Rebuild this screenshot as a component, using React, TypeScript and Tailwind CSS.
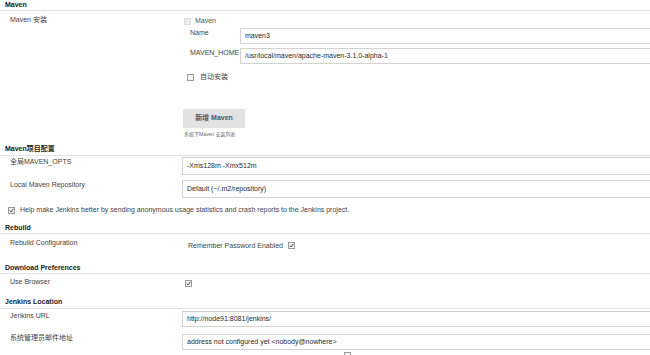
import React from 'react';

const Check = ({ checked = true, disabled = false }: { checked?: boolean; disabled?: boolean }) => (
  <svg width="7" height="7" viewBox="0 0 7 7" className="shrink-0">
    <rect
      x="0.5"
      y="0.5"
      width="6"
      height="6"
      fill={disabled ? '#ececec' : '#f4f4f4'}
      stroke={disabled ? '#dcdcdc' : '#9a9a9a'}
    />
    {checked && <path d="M1.7 3.6 L3 5 L5.4 1.8" fill="none" stroke="#333" strokeWidth="0.9" />}
  </svg>
);

const Header = ({ title, className = '' }: { title: string; className?: string }) => (
  <div className={`border-b border-[#e2e2e2] pl-[5px] font-bold text-[#222] ${className}`}>{title}</div>
);

// inputs run past the right edge of the window, as in the screenshot
const Field = ({ value, className = '' }: { value: string; className?: string }) => (
  <div
    className={`-mr-[20px] flex flex-1 items-center border border-[#d2d2d2] bg-white pl-[4px] text-[#2a2a2a] ${className}`}
  >
    {value}
  </div>
);

const Row = ({
  label,
  children,
  className = '',
  labelClass = '',
}: {
  label: string;
  children: React.ReactNode;
  className?: string;
  labelClass?: string;
}) => (
  <div className={`flex ${className}`}>
    <div className={`w-[182px] shrink-0 pl-[10px] ${labelClass}`}>{label}</div>
    <div className="flex flex-1">{children}</div>
  </div>
);

export default function App() {
  return (
    <div className="h-[355px] w-[650px] overflow-hidden bg-white font-['Liberation_Sans','Noto_Sans_CJK_SC',sans-serif] text-[7px] text-[#444]">
      <Header title="Maven" className="h-[11px] leading-[10px]" />

      {/* Maven install block */}
      <div className="flex">
        <div className="w-[182px] shrink-0 pt-[4px] pl-[10px] leading-[10px]">Maven 安装</div>
        <div className="flex flex-1 flex-col">
          <div className="mt-[5px] flex h-[10px] items-center pl-[2px]">
            <Check checked={false} disabled />
            <span className="ml-[4px] text-[#555]">Maven</span>
          </div>
          <div className="mt-[2px] flex h-[16px]">
            <div className="w-[58px] shrink-0 pl-[8px] leading-[10px]">Name</div>
            <Field value="maven3" />
          </div>
          <div className="mt-[4px] flex h-[16px]">
            <div className="w-[58px] shrink-0 pl-[8px] leading-[10px]">MAVEN_HOME</div>
            <Field value="/usr/local/maven/apache-maven-3.1.0-alpha-1" />
          </div>
          <div className="mt-[8px] flex h-[10px] items-center pl-[5px]">
            <Check checked={false} />
            <span className="ml-[6px]">自动安装</span>
          </div>
          <button className="mt-[27px] ml-[1px] h-[19px] w-[62px] bg-[#e2e2e2] font-bold text-[#555]">
            新增 Maven
          </button>
          <div className="mt-[3px] h-[6px] pl-[2px] text-[5px] leading-[6px] text-[#666]">系统下Maven 安装列表</div>
        </div>
      </div>

      <Header title="Maven项目配置" className="mt-[6px] h-[13px] leading-[12px]" />
      <Row label="全局MAVEN_OPTS" className="mt-[1px] h-[18px]" labelClass="leading-[10px]">
        <Field value="-Xms128m -Xmx512m" />
      </Row>
      <Row label="Local Maven Repository" className="mt-[5px] h-[18px]" labelClass="leading-[10px]">
        <Field value="Default (~/.m2/repository)" />
      </Row>

      <div className="mt-[7px] flex h-[10px] items-center pl-[8px]">
        <Check />
        <span className="ml-[5px]">
          Help make Jenkins better by sending anonymous usage statistics and crash reports to the Jenkins project.
        </span>
      </div>

      <Header title="Rebuild" className="mt-[8px] h-[11px] leading-[10px]" />
      <Row label="Rebuild Configuration" className="mt-[4px] h-[12px]" labelClass="leading-[10px]">
        <div className="flex items-center pt-[3px] pl-[6px] leading-[10px]">
          <span>Remember Password Enabled</span>
          <span className="ml-[5px] flex">
            <Check />
          </span>
        </div>
      </Row>

      <Header title="Download Preferences" className="mt-[13px] h-[11px] leading-[10px]" />
      <Row label="Use Browser" className="mt-[3px] h-[10px]" labelClass="leading-[10px]">
        <div className="flex items-center pt-[2px] pl-[3px]">
          <Check />
        </div>
      </Row>

      <Header title="Jenkins Location" className="mt-[9px] h-[13px] leading-[12px]" />
      <Row label="Jenkins URL" className="mt-[2px] h-[16px]" labelClass="leading-[10px]">
        <Field value="http://node91:8081/jenkins/" />
      </Row>
      <Row label="系统管理员邮件地址" className="mt-[7px] h-[16px]" labelClass="leading-[7px]">
        <Field value="address not configured yet <nobody@nowhere>" />
      </Row>
      <div className="mt-[2px] ml-[344px] h-[6px] w-[7px] border border-[#999] bg-[#f4f4f4]" />
    </div>
  );
}
